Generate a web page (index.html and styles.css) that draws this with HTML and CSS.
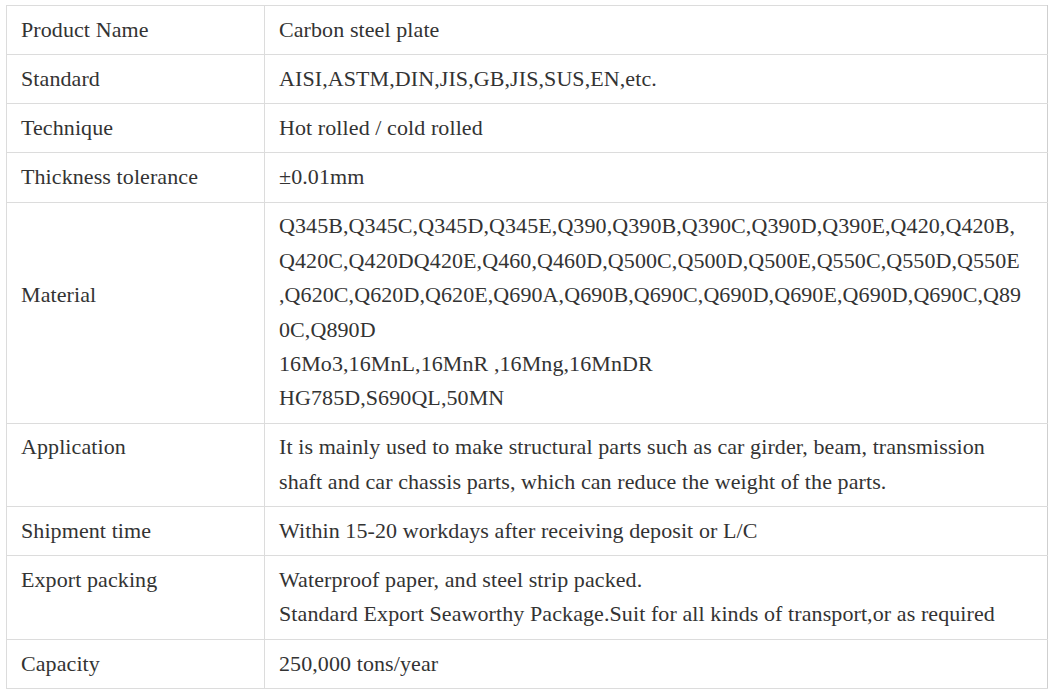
FILE: index.html
```html
<!DOCTYPE html>
<html lang="en">
<head>
<meta charset="utf-8">
<title>Carbon steel plate</title>
<link rel="stylesheet" href="styles.css">
</head>
<body>
<table class="spec">
  <colgroup><col class="col-label"><col class="col-value"></colgroup>
  <tbody>
    <tr><td>Product Name</td><td>Carbon steel plate</td></tr>
    <tr><td>Standard</td><td>AISI,ASTM,DIN,JIS,GB,JIS,SUS,EN,etc.</td></tr>
    <tr><td>Technique</td><td>Hot rolled / cold rolled</td></tr>
    <tr><td>Thickness tolerance</td><td>±0.01mm</td></tr>
    <tr>
      <td class="offset">Material</td>
      <td class="nowrap">Q345B,Q345C,Q345D,Q345E,Q390,Q390B,Q390C,Q390D,Q390E,Q420,Q420B,<br>Q420C,Q420DQ420E,Q460,Q460D,Q500C,Q500D,Q500E,Q550C,Q550D,Q550E<br>,Q620C,Q620D,Q620E,Q690A,Q690B,Q690C,Q690D,Q690E,Q690D,Q690C,Q89<br>0C,Q890D<br>16Mo3,16MnL,16MnR ,16Mng,16MnDR<br>HG785D,S690QL,50MN</td>
    </tr>
    <tr><td class="top">Application</td><td>It is mainly used to make structural parts such as car girder, beam, transmission<br>shaft and car chassis parts, which can reduce the weight of the parts.</td></tr>
    <tr><td>Shipment time</td><td>Within 15-20 workdays after receiving deposit or L/C</td></tr>
    <tr><td class="top">Export packing</td><td>Waterproof paper, and steel strip packed.<br>Standard Export Seaworthy Package.Suit for all kinds of transport,or as required</td></tr>
    <tr><td>Capacity</td><td>250,000 tons/year</td></tr>
  </tbody>
</table>
</body>
</html>
```
FILE: styles.css
```css
html, body {
  margin: 0;
  background: #ffffff;
}
body {
  padding: 5px 6px;
  font-family: "Liberation Serif", "Times New Roman", serif;
  font-size: 22px;
  line-height: 34.375px;
  letter-spacing: 0.09px;
  color: #333333;
}
.spec {
  border-collapse: collapse;
  width: 1042px;
  table-layout: fixed;
}
.col-label { width: 258px; }
.spec td {
  border: 1px solid #dcdcdc;
  padding: 6.875px 14px;
  vertical-align: middle;
  text-align: left;
}
.spec tr > td:last-child {
  border-right-color: #cfcfcf;
}
.spec td.top {
  vertical-align: top;
}
.spec td.offset {
  padding-bottom: 41.25px;
}
.spec td.nowrap {
  white-space: nowrap;
}
```
